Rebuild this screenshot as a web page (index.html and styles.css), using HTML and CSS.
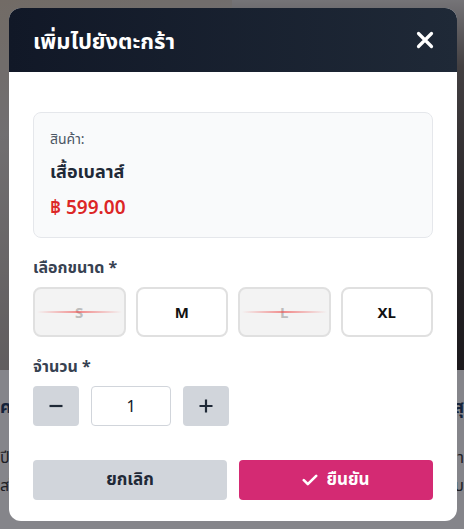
FILE: index.html
```html
<!DOCTYPE html>
<html lang="th">
<head>
<meta charset="utf-8">
<title>เพิ่มไปยังตะกร้า</title>
<link rel="stylesheet" href="styles.css">
</head>
<body>
<div class="page">
  <div class="card-bg">
    <div class="bg-img bg-img-left"></div>
    <div class="bg-info">
      <div class="bg-title">ค</div>
      <div class="bg-text">ปี</div>
      <div class="bg-text">สไ</div>
    </div>
  </div>
  <div class="card-bg card-bg-right">
    <div class="bg-img bg-img-right"></div>
    <div class="bg-info">
      <div class="bg-title">สุ</div>
      <div class="bg-text">า</div>
      <div class="bg-text">บ</div>
    </div>
  </div>
</div>
<div class="overlay">
  <div class="modal">
    <div class="modal-header">
      <h2 class="modal-title">เพิ่มไปยังตะกร้า</h2>
      <button class="close-btn" aria-label="ปิด">
        <svg width="18" height="18" viewBox="0 0 18 18"><path d="M2.5 2.5 L15.5 15.5 M15.5 2.5 L2.5 15.5" stroke="#fff" stroke-width="3.2" stroke-linecap="round"/></svg>
      </button>
    </div>
    <div class="modal-body">
      <div class="product">
        <div class="product-label">สินค้า:</div>
        <div class="product-name">เสื้อเบลาส์</div>
        <div class="product-price">฿ 599.00</div>
      </div>
      <div class="field-label">เลือกขนาด *</div>
      <div class="sizes">
        <button class="size size-disabled">S</button>
        <button class="size">M</button>
        <button class="size size-disabled">L</button>
        <button class="size">XL</button>
      </div>
      <div class="field-label field-label-qty">จำนวน *</div>
      <div class="qty">
        <button class="qty-btn" aria-label="ลด">
          <svg width="16" height="16" viewBox="0 0 16 16"><path d="M1.5 8 H14.5" stroke="#1f2937" stroke-width="2.2"/></svg>
        </button>
        <div class="qty-input">1</div>
        <button class="qty-btn" aria-label="เพิ่ม">
          <svg width="16" height="16" viewBox="0 0 16 16"><path d="M1.5 8 H14.5 M8 1.5 V14.5" stroke="#1f2937" stroke-width="2.2"/></svg>
        </button>
      </div>
      <div class="actions">
        <button class="btn btn-cancel">ยกเลิก</button>
        <button class="btn btn-confirm">
          <svg width="16" height="14" viewBox="0 0 16 14"><path d="M1.8 7.2 L5.8 11.2 L14.2 2.8" stroke="#fff" stroke-width="2.6" fill="none" stroke-linecap="round" stroke-linejoin="round"/></svg>
          <span>ยืนยัน</span>
        </button>
      </div>
    </div>
  </div>
</div>
</body>
</html>
```
FILE: styles.css
```css
* { box-sizing: border-box; }
html, body { margin: 0; padding: 0; }
body {
  width: 464px;
  height: 529px;
  overflow: hidden;
  font-family: "Noto Sans", "Noto Sans Thai", "Liberation Sans", sans-serif;
  background: #ffffff;
  position: relative;
}
.page {
  display: grid;
  grid-template-columns: 1fr 1fr;
  height: 529px;
}
.card-bg { display: flex; flex-direction: column; }
.bg-img { height: 370px; }
.bg-img-left { background: linear-gradient(160deg, #d8cbb6 0%, #d6d2cc 30%, #c4beb7 60%, #aaa39c 100%); }
.bg-img-right { background: linear-gradient(180deg, #dedcd9 0%, #7a736d 18%, #4a433e 55%, #2c2724 100%); }
.bg-info {
  padding: 24px 0 0 0;
  color: #1e3a5f;
  white-space: nowrap;
}
.card-bg-right .bg-info { text-align: right; }
.bg-title { font-weight: 700; font-size: 18px; margin-bottom: 22px; }
.bg-text { font-size: 16px; color: #333; line-height: 28px; }

.overlay {
  position: absolute;
  inset: 0;
  background: rgba(12, 12, 22, 0.5);
  display: flex;
  align-items: center;
  justify-content: center;
  padding-left: 2px;
}
.modal {
  width: 448px;
  background: #ffffff;
  border-radius: 12px;
  overflow: hidden;
}
.modal-header {
  height: 64px;
  background: linear-gradient(90deg, #111827 0%, #1f2937 100%);
  display: flex;
  align-items: center;
  justify-content: space-between;
  padding: 0 23px 0 24px;
}
.modal-title {
  margin: 0;
  color: #ffffff;
  font-size: 22px;
  font-weight: 700;
  line-height: 28px;
}
.close-btn {
  background: none;
  border: 0;
  padding: 0;
  width: 18px;
  height: 18px;
  display: flex;
}
.modal-body {
  padding: 40px 24px 21px;
}
.product {
  background: #f9fafb;
  border: 1px solid #e5e7eb;
  border-radius: 8px;
  padding: 16px;
}
.product-label {
  font-size: 14px;
  line-height: 20px;
  color: #4b5563;
  margin-bottom: 8px;
}
.product-name {
  font-size: 18px;
  line-height: 28px;
  font-weight: 700;
  color: #1f2937;
  margin-bottom: 8px;
}
.product-price {
  font-size: 19px;
  line-height: 28px;
  font-weight: 600;
  color: #dc2626;
}
.field-label {
  margin-top: 19px;
  font-size: 16px;
  line-height: 20px;
  font-weight: 700;
  color: #374151;
  margin-bottom: 10px;
}
.sizes {
  display: grid;
  grid-template-columns: repeat(4, 1fr);
  gap: 10px;
}
.size {
  position: relative;
  height: 50px;
  border: 2px solid #e0e0e0;
  border-radius: 8px;
  background: #ffffff;
  font-family: inherit;
  font-size: 15px;
  font-weight: 700;
  color: #111111;
  padding: 0;
}
.size-disabled {
  background: #f3f3f3;
  color: #bdbdbd;
}
.size-disabled::after {
  content: "";
  position: absolute;
  left: 2px;
  right: 2px;
  top: 50%;
  height: 2px;
  margin-top: -1px;
  background: linear-gradient(90deg, rgba(239,68,68,0) 0%, rgba(239,68,68,0.3) 25%, rgba(239,68,68,0.6) 50%, rgba(239,68,68,0.3) 75%, rgba(239,68,68,0) 100%);
}
.qty {
  display: flex;
  gap: 12px;
  height: 40px;
}
.qty-btn {
  width: 46px;
  height: 40px;
  background: #d1d5db;
  border: 0;
  border-radius: 4px;
  display: flex;
  align-items: center;
  justify-content: center;
  padding: 0;
}
.qty-input {
  width: 80px;
  height: 40px;
  border: 1px solid #d1d5db;
  border-radius: 4px;
  display: flex;
  align-items: center;
  justify-content: center;
  font-size: 16px;
  color: #111827;
}
.actions {
  margin-top: 34px;
  display: grid;
  grid-template-columns: 1fr 1fr;
  gap: 12px;
}
.btn {
  height: 40px;
  border: 0;
  border-radius: 4px;
  font-family: inherit;
  font-size: 17px;
  font-weight: 700;
  display: flex;
  align-items: center;
  justify-content: center;
  gap: 8px;
  padding: 0;
}
.btn-cancel {
  background: #d1d5db;
  color: #1f2937;
}
.btn-confirm {
  background: #d42a73;
  color: #ffffff;
}
```
